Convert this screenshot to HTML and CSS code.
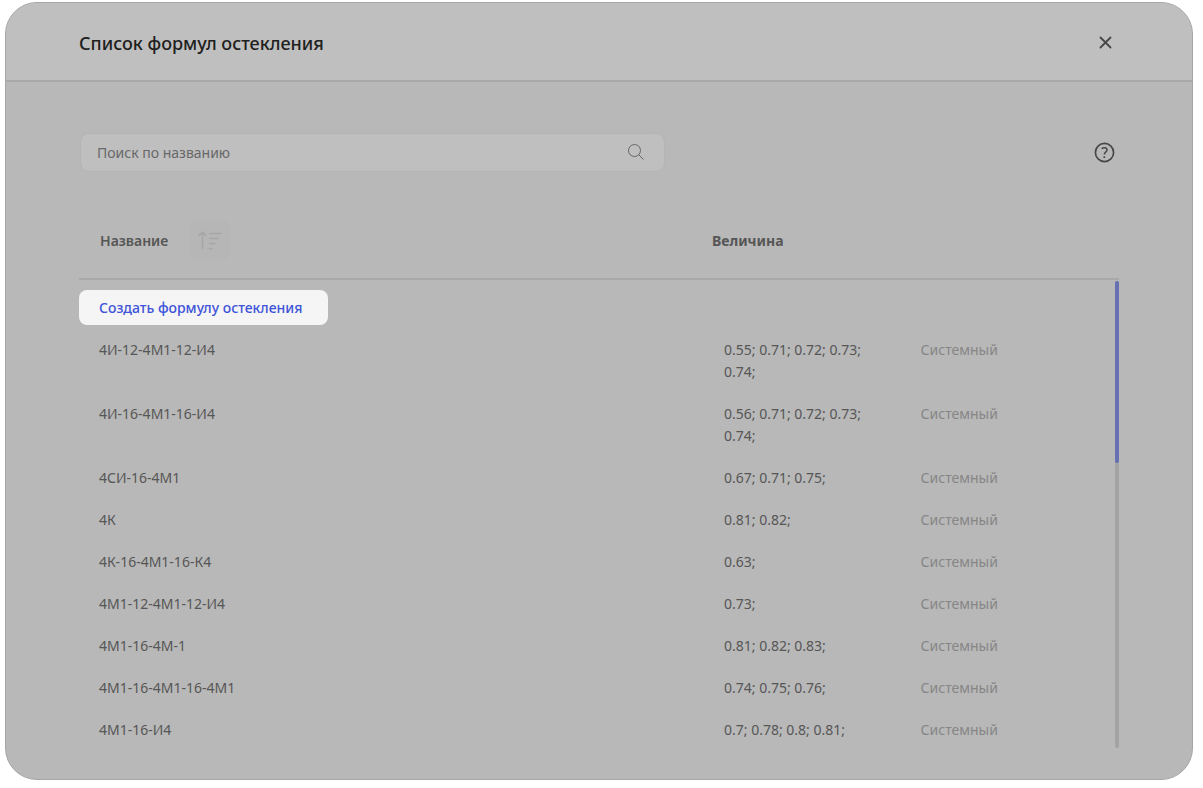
FILE: index.html
```
<!DOCTYPE html>
<html lang="ru">
<head>
<meta charset="utf-8">
<title>Список формул остекления</title>
<link rel="stylesheet" href="styles.css">
</head>
<body>
<main class="dialog" role="dialog" aria-labelledby="dialog-title">
  <header class="dialog-header">
    <h1 class="dialog-title" id="dialog-title">Список формул остекления</h1>
    <button class="icon-button" type="button" aria-label="Закрыть">
      <svg width="20" height="20" viewBox="0 0 20 20" fill="none" stroke="currentColor" stroke-width="1.8" stroke-linecap="round"><path d="M5.500 5.500l10 10M15.500 5.500L5.500 15.500"/></svg>
    </button>
  </header>
  <div class="dialog-body">
    <div class="toolbar">
      <div class="search">
        <input class="search-input" type="text" placeholder="Поиск по названию" aria-label="Поиск по названию">
        <svg class="search-icon" width="18" height="18" viewBox="0 0 18 18" fill="none" stroke="currentColor"><circle cx="7.500" cy="6.500" r="6"/><path d="M11.800 10.800L16.500 15.500"/></svg>
      </div>
      <button class="icon-button" type="button" aria-label="Справка">
        <svg width="22" height="22" viewBox="0 0 22 22" fill="none" stroke="currentColor"><circle cx="11.500" cy="10.500" r="9.100" stroke-width="1.700"/><path d="M8.600 6.700C10 5.500 14 5.200 14 8c0 2.100-2.700 2.200-2.700 4.500" stroke-width="1.500"/><path d="M11.300 14.300v1.700" stroke-width="1.700"/></svg>
      </button>
    </div>
    <div class="table-area">
      <table class="formulas">
        <colgroup><col class="col-name"><col class="col-value"><col class="col-type"></colgroup>
        <thead>
          <tr>
            <th class="head-name" scope="col">
              <div class="head-sort"><span class="head-label">Название</span>
                <button class="sort-button" type="button" aria-label="Сортировать">
                  <svg width="24" height="20" viewBox="0 0 24 20" fill="none" stroke="currentColor" stroke-width="1.500" stroke-linecap="round" stroke-linejoin="round"><path d="M4.500 18.500V2M1 5.500L4.500 2 8 5.500M11.500 3.500H23M11.500 8.500h8.500M11.500 13.500h5.500M11.500 18.500h2.500"/></svg>
                </button>
              </div>
            </th>
            <th class="head-value" scope="col">Величина</th>
            <td></td>
          </tr>
        </thead>
        <tbody>
          <tr><td class="create-cell" colspan="3"><button class="create-button" type="button">Создать формулу остекления</button></td></tr>
          <tr><td>4И-12-4М1-12-И4</td><td>0.55; 0.71; 0.72; 0.73; 0.74;</td><td class="type">Системный</td></tr>
          <tr><td>4И-16-4М1-16-И4</td><td>0.56; 0.71; 0.72; 0.73; 0.74;</td><td class="type">Системный</td></tr>
          <tr><td>4СИ-16-4М1</td><td>0.67; 0.71; 0.75;</td><td class="type">Системный</td></tr>
          <tr><td>4К</td><td>0.81; 0.82;</td><td class="type">Системный</td></tr>
          <tr><td>4К-16-4М1-16-К4</td><td>0.63;</td><td class="type">Системный</td></tr>
          <tr><td>4М1-12-4М1-12-И4</td><td>0.73;</td><td class="type">Системный</td></tr>
          <tr><td>4М1-16-4М-1</td><td>0.81; 0.82; 0.83;</td><td class="type">Системный</td></tr>
          <tr><td>4М1-16-4М1-16-4М1</td><td>0.74; 0.75; 0.76;</td><td class="type">Системный</td></tr>
          <tr><td>4М1-16-И4</td><td>0.7; 0.78; 0.8; 0.81;</td><td class="type">Системный</td></tr>
        </tbody>
      </table>
      <div class="scroll-track"><div class="scroll-thumb"></div></div>
    </div>
  </div>
</main>
</body>
</html>
```
FILE: styles.css
```
* { box-sizing: border-box; }

body {
  margin: 0;
  padding: 2px 10px 8px 5px;
  background: #fff;
  color: #565656;
  font: 14px/22px "Noto Sans", "Open Sans", sans-serif;
}

button, input { font: inherit; color: inherit; }

button {
  border: 0;
  padding: 0;
  background: none;
  cursor: pointer;
}

svg { display: block; }

.dialog {
  border: 1px solid #a6a6a6;
  border-radius: 32px;
  background: #b8b8b8;
  overflow: hidden;
}

.dialog-header {
  display: flex;
  align-items: center;
  justify-content: space-between;
  height: 79px;
  padding: 0 77px 0 73px;
  border-bottom: 2px solid #a9a9a9;
  background: #bfbfbf;
}

.dialog-title {
  margin: 0;
  padding-top: 2px;
  color: #202020;
  font-size: 18px;
  font-weight: 500;
  line-height: 24px;
}

.icon-button { color: #484848; }

.dialog-body { padding: 52px 73px 28px; }

.toolbar {
  display: flex;
  align-items: center;
  justify-content: space-between;
  padding: 0 4px 0 2px;
}

.search {
  display: flex;
  align-items: center;
  width: 583px;
  max-width: 80%;
  height: 37px;
  padding: 0 19px 0 16px;
  border-radius: 8px;
  background: #bfbfbf;
  box-shadow: 0 0 1px 1px #b4b4b4;
}

.search-input {
  flex: 1;
  min-width: 0;
  padding: 0;
  border: 0;
  outline: 0;
  background: none;
}

.search-input::placeholder { color: #686868; opacity: 1; }

.search-icon { color: #666; }

.table-area {
  position: relative;
  padding-top: 30px;
}

.formulas {
  width: 100%;
  table-layout: fixed;
  border-collapse: separate;
  border-spacing: 0;
}

.col-name { width: 60%; }
.col-type { width: 21%; }

.formulas th, .formulas td {
  padding: 10px 20px 10px 21px;
  text-align: left;
  vertical-align: top;
}

.formulas tbody td:first-child { padding-left: 20px; }

.formulas thead th, .formulas thead td {
  height: 79px;
  padding: 0 20px;
  border-bottom: 2px solid #a9a9a9;
  vertical-align: middle;
}

.formulas .head-name { padding-left: 21px; font-weight: 600; }
.formulas .head-value { padding: 2px 20px 0 9px; font-weight: 700; }

.head-sort {
  display: flex;
  align-items: center;
  gap: 22px;
}

.head-label { padding-top: 2px; }

.sort-button {
  display: grid;
  place-items: center;
  width: 40px;
  height: 40px;
  border-radius: 8px;
  background: #b6b6b6;
  color: #a6a6a6;
}

.formulas tbody .create-cell:first-child { padding: 10px 0 4px; }

.create-button {
  display: block;
  height: 35px;
  padding: 0 26px 0 20px;
  border-radius: 8px;
  background: #f5f5f5;
  color: #3d53d8;
  font-weight: 500;
}

.formulas .type { padding-left: 20px; color: #868686; }

.scroll-track {
  position: absolute;
  top: 110px;
  right: 0;
  bottom: 3px;
  width: 4px;
  border-radius: 2px;
  background: #a3a3a3;
}

.scroll-thumb {
  height: 39%;
  border-radius: 2px;
  background: #6670b2;
}
```
